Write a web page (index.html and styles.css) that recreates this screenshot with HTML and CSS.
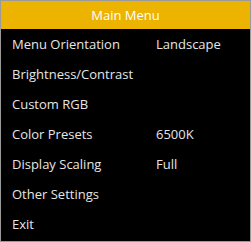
FILE: index.html
```html
<!DOCTYPE html>
<html lang="en">
<head>
    <meta charset="UTF-8">
    <title>Main Menu</title>
    <link rel="stylesheet" href="styles.css">
</head>
<body>
    <div class="menu">
        <div class="menu-title">Main Menu</div>
        <div class="menu-row"><span class="label">Menu Orientation</span><span class="value">Landscape</span></div>
        <div class="menu-row"><span class="label">Brightness/Contrast</span><span class="value"></span></div>
        <div class="menu-row"><span class="label">Custom RGB</span><span class="value"></span></div>
        <div class="menu-row"><span class="label">Color Presets</span><span class="value">6500K</span></div>
        <div class="menu-row"><span class="label">Display Scaling</span><span class="value">Full</span></div>
        <div class="menu-row"><span class="label">Other Settings</span><span class="value"></span></div>
        <div class="menu-row"><span class="label">Exit</span><span class="value"></span></div>
    </div>
</body>
</html>
```
FILE: styles.css
```css
html{
    height: 100%;
}
body{
    margin: 0;
    height: 100%;
    background-color: #000;
    font-family: "Open Sans", "Noto Sans", sans-serif;
    font-size: 13px;
}
.menu{
    height: 100%;
    box-sizing: border-box;
    border: 1px solid #9a9a9a;
    background-color: #000;
}
.menu-title{
    height: 28px;
    display: flex;
    align-items: center;
    justify-content: center;
    background-color: #ecb300;
    color: #fff;
}
.menu-row{
    height: 30px;
    display: grid;
    grid-template-columns: 144px 1fr;
    align-items: center;
    padding-left: 11px;
    color: #e6e6e6;
}
```
